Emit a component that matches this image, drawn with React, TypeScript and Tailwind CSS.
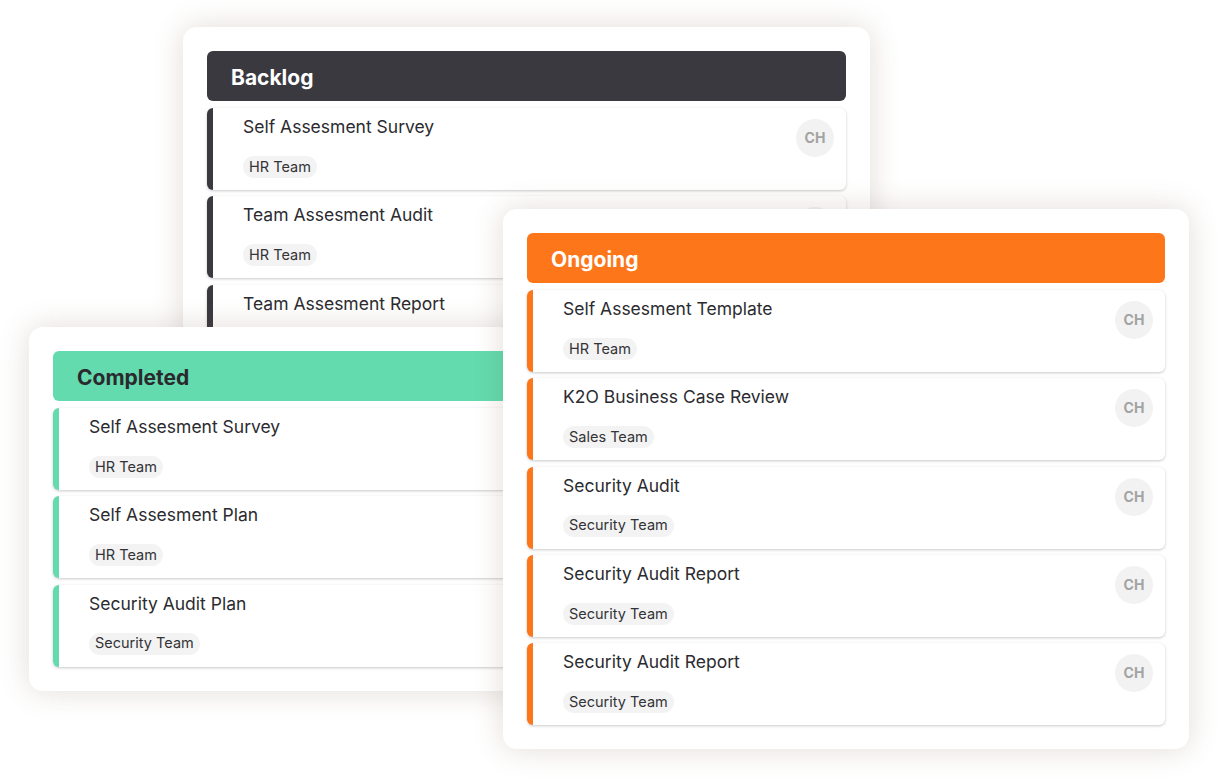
import React from 'react';

type Task = { title: string; team: string };

const backlog: Task[] = [
    { title: 'Self Assesment Survey', team: 'HR Team' },
    { title: 'Team Assesment Audit', team: 'HR Team' },
    { title: 'Team Assesment Report', team: 'HR Team' },
];

const completed: Task[] = [
    { title: 'Self Assesment Survey', team: 'HR Team' },
    { title: 'Self Assesment Plan', team: 'HR Team' },
    { title: 'Security Audit Plan', team: 'Security Team' },
];

const ongoing: Task[] = [
    { title: 'Self Assesment Template', team: 'HR Team' },
    { title: 'K2O Business Case Review', team: 'Sales Team' },
    { title: 'Security Audit', team: 'Security Team' },
    { title: 'Security Audit Report', team: 'Security Team' },
    { title: 'Security Audit Report', team: 'Security Team' },
];

const TaskCard: React.FC<{ task: Task; accent: string }> = ({ task, accent }) => (
    <div className={`flex justify-between bg-white rounded-md border-l-[6px] ${accent} shadow-[0_1px_3px_rgba(0,0,0,0.22)] pl-[30px] pr-3 h-[82px]`}>
        <div className="flex flex-col pt-[7px]">
            <div className="text-[17.5px] leading-6 text-[#2b2b30]">{task.title}</div>
            <div className="mt-[17px] self-start inline-flex items-center bg-[#f3f3f3] rounded-full px-[6px] h-[22px] text-[14.5px] leading-none text-[#333338]">
                {task.team}
            </div>
        </div>
        <div className="mt-[11px] w-[38px] h-[38px] shrink-0 rounded-full bg-[#f2f2f2] flex items-center justify-center text-[14px] leading-none font-bold text-[#a3a3a3]">
            CH
        </div>
    </div>
);

const Board: React.FC<{ title: string; header: string; titleColor: string; accent: string; tasks: Task[] }> = ({ title, header, titleColor, accent, tasks }) => (
    <div className="bg-white rounded-[14px] shadow-[0_0_30px_rgba(110,80,60,0.2)] p-6 flex flex-col gap-[7px]">
        <div className={`${header} rounded-md h-[50px] flex items-center px-6 pt-[3px]`}>
            <span className={`text-[21px] font-bold ${titleColor}`}>{title}</span>
        </div>
        <div className="flex flex-col gap-[6.3px]">
            {tasks.map((t, i) => (
                <TaskCard key={i} task={t} accent={accent} />
            ))}
        </div>
    </div>
);

export default function App() {
    return (
        <div className="relative w-[1221px] h-[783px] bg-white overflow-hidden" style={{ fontFamily: '"Inter", "Open Sans", sans-serif' }}>
            <div className="absolute left-[183px] top-[27px] w-[687px]">
                <Board title="Backlog" header="bg-[#3a3940]" titleColor="text-white" accent="border-[#3a3940]" tasks={backlog} />
            </div>
            <div className="absolute left-[29px] top-[327px] w-[687px]">
                <Board title="Completed" header="bg-[#63dbae]" titleColor="text-[#2a2a2e]" accent="border-[#63dbae]" tasks={completed} />
            </div>
            <div className="absolute left-[503px] top-[209px] w-[686px]">
                <Board title="Ongoing" header="bg-[#fd7619]" titleColor="text-white" accent="border-[#fd7619]" tasks={ongoing} />
            </div>
        </div>
    );
}
